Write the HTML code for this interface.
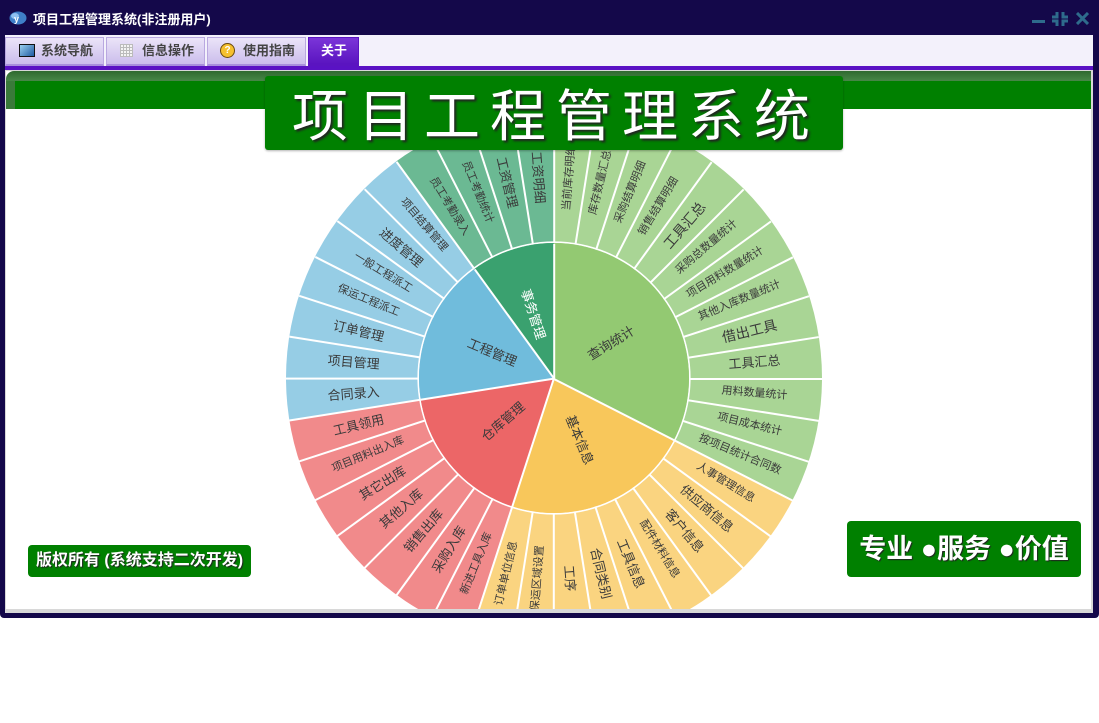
<!DOCTYPE html>
<html><head><meta charset="utf-8">
<style>
*{margin:0;padding:0;box-sizing:border-box}
body{width:1099px;height:723px;background:#fff;position:relative;overflow:hidden;font-family:"Liberation Sans","Noto Sans CJK SC",sans-serif}
.a{position:absolute}
#frame{left:0;top:0;width:1099px;height:618px;background:#14084a;border-radius:0 0 4px 4px}
#title{left:33px;top:9px;color:#fff;font-size:13px;font-weight:bold}
#tabbar{left:5px;top:35px;width:1088px;height:31px;background:#f3f1fb}
.tab{position:absolute;top:2px;height:29px;background:linear-gradient(#ebe4f8,#cbbdec);border:1px solid #b9a8e0;border-bottom:2px solid #a88fdc;font-size:13px;font-weight:bold;color:#444;line-height:26px}
#pline{left:5px;top:66px;width:1088px;height:4px;background:#5a12c4}
#content{left:5px;top:70px;width:1088px;height:543px;background:#d8d8d8}
#inner{left:6px;top:71px;width:1085px;height:538px;background:#fff;overflow:hidden}
.seg{position:absolute;left:548px;top:307px;height:1.6px;background:#fff;transform-origin:0 50%}
.l{position:absolute;left:548px;top:307px;width:0;height:0}
.l span{position:absolute;transform:translate(-50%,-50%);white-space:nowrap;color:#3a3a3a;font-size:12px;line-height:1}
</style></head><body>
<div class="a" id="frame"></div>
<svg class="a" style="left:9px;top:10px" width="18" height="16"><ellipse cx="9" cy="8" rx="8.5" ry="6.5" fill="#3f7fc8"/><ellipse cx="6" cy="6" rx="4" ry="3" fill="#8fc0f0"/><text x="5" y="12" font-size="9" font-weight="bold" fill="#fff" font-family="Liberation Sans">y</text></svg>
<div class="a" id="title">项目工程管理系统(非注册用户)</div>
<div class="a" style="left:1032px;top:20px;width:13px;height:3px;background:#2e6b8c"></div>
<svg class="a" style="left:1052px;top:12px" width="16" height="14" stroke="#2e6b8c" stroke-width="3" fill="none"><path d="M5 0V5H0M11 0V5H16M5 14V9H0M11 14V9H16"/></svg>
<svg class="a" style="left:1076px;top:12px" width="13" height="13" stroke="#2e6b8c" stroke-width="3"><path d="M1 1L12 12M12 1L1 12"/></svg>
<div class="a" id="tabbar"></div>
<div class="tab" style="left:5px;width:99px;top:37px"><span style="position:absolute;left:13px;top:6px;width:16px;height:13px;border:1px solid #111;background:linear-gradient(135deg,#9ad0f0,#1e5aa0)"></span><span style="position:absolute;left:35px">系统导航</span></div>
<div class="tab" style="left:106px;width:99px;top:37px"><span style="position:absolute;left:13px;top:6px;width:13px;height:13px;background:repeating-linear-gradient(90deg,#bbb 0 1px,transparent 1px 3px),repeating-linear-gradient(0deg,#bbb 0 1px,#f4f4f4 1px 3px)"></span><span style="position:absolute;left:35px">信息操作</span></div>
<div class="tab" style="left:207px;width:99px;top:37px"><span style="position:absolute;left:12px;top:5px;width:15px;height:15px;border-radius:50%;background:#f5c030;border:1px solid #6a4a10;font-size:10px;line-height:13px;text-align:center;color:#fff;font-weight:bold">?</span><span style="position:absolute;left:35px">使用指南</span></div>
<div class="tab" style="left:308px;width:51px;top:37px;background:linear-gradient(#7b35d8,#5a14c0);color:#fff;border-color:#5a14c0"><span style="position:absolute;left:12px">关于</span></div>
<div class="a" id="pline"></div>
<div class="a" id="content"></div>
<div class="a" id="inner">
 <div class="a" style="left:0;top:0;width:1085px;height:11px;background:linear-gradient(#2f6a2f,#4a8a4a);border-radius:8px 0 0 0"></div>
 <div class="a" style="left:0;top:10px;width:1085px;height:28px;background:#3a7a3a"></div>
 <div class="a" style="left:9px;top:10px;width:1076px;height:28px;background:#008000"></div>
 <div class="a" style="left:280px;top:39px;width:536px;height:536px;border-radius:50%;background:conic-gradient(#a9d595 0 117deg,#fad480 117deg 198deg,#f18a8b 198deg 261deg,#96cde5 261deg 324deg,#6bb993 324deg 360deg)"></div>
 <div class="seg" style="width:268px;transform:rotate(-90deg)"></div>
 <div class="seg" style="width:268px;transform:rotate(27deg)"></div>
 <div class="seg" style="width:268px;transform:rotate(108deg)"></div>
 <div class="seg" style="width:268px;transform:rotate(171deg)"></div>
 <div class="seg" style="width:268px;transform:rotate(234deg)"></div>
 <div class="seg" style="width:268px;transform:rotate(-81deg)"></div><div class="seg" style="width:268px;transform:rotate(-72deg)"></div><div class="seg" style="width:268px;transform:rotate(-63deg)"></div><div class="seg" style="width:268px;transform:rotate(-54deg)"></div><div class="seg" style="width:268px;transform:rotate(-45deg)"></div><div class="seg" style="width:268px;transform:rotate(-36deg)"></div><div class="seg" style="width:268px;transform:rotate(-27deg)"></div><div class="seg" style="width:268px;transform:rotate(-18deg)"></div><div class="seg" style="width:268px;transform:rotate(-9deg)"></div><div class="seg" style="width:268px;transform:rotate(0deg)"></div><div class="seg" style="width:268px;transform:rotate(9deg)"></div><div class="seg" style="width:268px;transform:rotate(18deg)"></div><div class="seg" style="width:268px;transform:rotate(36deg)"></div><div class="seg" style="width:268px;transform:rotate(45deg)"></div><div class="seg" style="width:268px;transform:rotate(54deg)"></div><div class="seg" style="width:268px;transform:rotate(63deg)"></div><div class="seg" style="width:268px;transform:rotate(72deg)"></div><div class="seg" style="width:268px;transform:rotate(81deg)"></div><div class="seg" style="width:268px;transform:rotate(90deg)"></div><div class="seg" style="width:268px;transform:rotate(99deg)"></div><div class="seg" style="width:268px;transform:rotate(117deg)"></div><div class="seg" style="width:268px;transform:rotate(126deg)"></div><div class="seg" style="width:268px;transform:rotate(135deg)"></div><div class="seg" style="width:268px;transform:rotate(144deg)"></div><div class="seg" style="width:268px;transform:rotate(153deg)"></div><div class="seg" style="width:268px;transform:rotate(162deg)"></div><div class="seg" style="width:268px;transform:rotate(180deg)"></div><div class="seg" style="width:268px;transform:rotate(189deg)"></div><div class="seg" style="width:268px;transform:rotate(198deg)"></div><div class="seg" style="width:268px;transform:rotate(207deg)"></div><div class="seg" style="width:268px;transform:rotate(216deg)"></div><div class="seg" style="width:268px;transform:rotate(225deg)"></div><div class="seg" style="width:268px;transform:rotate(243deg)"></div><div class="seg" style="width:268px;transform:rotate(252deg)"></div><div class="seg" style="width:268px;transform:rotate(261deg)"></div>
 <div class="a" style="left:413px;top:172px;width:270px;height:270px;border-radius:50%;background:conic-gradient(#93c972 0 117deg,#f8c75b 117deg 198deg,#ec6667 198deg 261deg,#70bcdc 261deg 324deg,#3aa16f 324deg 360deg);box-shadow:0 0 0 1.6px #fff"></div>
 <div class="seg" style="width:135px;transform:rotate(-90deg)"></div>
 <div class="seg" style="width:135px;transform:rotate(27deg)"></div>
 <div class="seg" style="width:135px;transform:rotate(108deg)"></div>
 <div class="seg" style="width:135px;transform:rotate(171deg)"></div>
 <div class="seg" style="width:135px;transform:rotate(234deg)"></div>
 <div class="l" style="transform:rotate(-31.5deg) translateX(67px)"><span style="font-size:13px">查询统计</span></div>
 <div class="l" style="transform:rotate(67.5deg) translateX(67px)"><span style="font-size:13px">基本信息</span></div>
 <div class="l" style="transform:rotate(139.5deg) translateX(67px) rotate(180deg)"><span style="font-size:13px">仓库管理</span></div>
 <div class="l" style="transform:rotate(202.5deg) translateX(67px) rotate(180deg)"><span style="font-size:13px">工程管理</span></div>
 <div class="l" style="transform:rotate(252deg) translateX(67px) rotate(180deg)"><span style="font-size:13px;color:#fff">事务管理</span></div>
 <div class="l" style="transform:rotate(-85.5deg) translateX(201px)"><span style="font-size:11px">当前库存明细</span></div>
 <div class="l" style="transform:rotate(-76.5deg) translateX(201px)"><span style="font-size:11px">库存数量汇总</span></div>
 <div class="l" style="transform:rotate(-67.5deg) translateX(201px)"><span style="font-size:11px">采购结算明细</span></div>
 <div class="l" style="transform:rotate(-58.5deg) translateX(201px)"><span style="font-size:11px">销售结算明细</span></div>
 <div class="l" style="transform:rotate(-49.5deg) translateX(201px)"><span style="font-size:14px">工具汇总</span></div>
 <div class="l" style="transform:rotate(-40.5deg) translateX(201px)"><span style="font-size:11px">采购总数量统计</span></div>
 <div class="l" style="transform:rotate(-31.5deg) translateX(201px)"><span style="font-size:11px">项目用料数量统计</span></div>
 <div class="l" style="transform:rotate(-22.5deg) translateX(201px)"><span style="font-size:11px">其他入库数量统计</span></div>
 <div class="l" style="transform:rotate(-13.5deg) translateX(201px)"><span style="font-size:14px">借出工具</span></div>
 <div class="l" style="transform:rotate(-4.5deg) translateX(201px)"><span style="font-size:13px">工具汇总</span></div>
 <div class="l" style="transform:rotate(4.5deg) translateX(201px)"><span style="font-size:11px">用料数量统计</span></div>
 <div class="l" style="transform:rotate(13.5deg) translateX(201px)"><span style="font-size:11px">项目成本统计</span></div>
 <div class="l" style="transform:rotate(22.5deg) translateX(201px)"><span style="font-size:11px">按项目统计合同数</span></div>
 <div class="l" style="transform:rotate(31.5deg) translateX(201px)"><span style="font-size:11px">人事管理信息</span></div>
 <div class="l" style="transform:rotate(40.5deg) translateX(201px)"><span style="font-size:13px">供应商信息</span></div>
 <div class="l" style="transform:rotate(49.5deg) translateX(201px)"><span style="font-size:13px">客户信息</span></div>
 <div class="l" style="transform:rotate(58.5deg) translateX(201px)"><span style="font-size:11px">配件材料信息</span></div>
 <div class="l" style="transform:rotate(67.5deg) translateX(201px)"><span style="font-size:13px">工具信息</span></div>
 <div class="l" style="transform:rotate(76.5deg) translateX(201px)"><span style="font-size:13px">合同类别</span></div>
 <div class="l" style="transform:rotate(85.5deg) translateX(201px)"><span style="font-size:13px">工序</span></div>
 <div class="l" style="transform:rotate(94.5deg) translateX(201px) rotate(180deg)"><span style="font-size:11px">保运区域设置</span></div>
 <div class="l" style="transform:rotate(103.5deg) translateX(201px) rotate(180deg)"><span style="font-size:11px">订单单位信息</span></div>
 <div class="l" style="transform:rotate(112.5deg) translateX(201px) rotate(180deg)"><span style="font-size:11px">新进工具入库</span></div>
 <div class="l" style="transform:rotate(121.5deg) translateX(201px) rotate(180deg)"><span style="font-size:13px">采购入库</span></div>
 <div class="l" style="transform:rotate(130.5deg) translateX(201px) rotate(180deg)"><span style="font-size:13px">销售出库</span></div>
 <div class="l" style="transform:rotate(139.5deg) translateX(201px) rotate(180deg)"><span style="font-size:13px">其他入库</span></div>
 <div class="l" style="transform:rotate(148.5deg) translateX(201px) rotate(180deg)"><span style="font-size:13px">其它出库</span></div>
 <div class="l" style="transform:rotate(157.5deg) translateX(201px) rotate(180deg)"><span style="font-size:11px">项目用料出入库</span></div>
 <div class="l" style="transform:rotate(166.5deg) translateX(201px) rotate(180deg)"><span style="font-size:13px">工具领用</span></div>
 <div class="l" style="transform:rotate(175.5deg) translateX(201px) rotate(180deg)"><span style="font-size:13px">合同录入</span></div>
 <div class="l" style="transform:rotate(184.5deg) translateX(201px) rotate(180deg)"><span style="font-size:13px">项目管理</span></div>
 <div class="l" style="transform:rotate(193.5deg) translateX(201px) rotate(180deg)"><span style="font-size:13px">订单管理</span></div>
 <div class="l" style="transform:rotate(202.5deg) translateX(201px) rotate(180deg)"><span style="font-size:11px">保运工程派工</span></div>
 <div class="l" style="transform:rotate(211.5deg) translateX(201px) rotate(180deg)"><span style="font-size:11px">一般工程派工</span></div>
 <div class="l" style="transform:rotate(220.5deg) translateX(201px) rotate(180deg)"><span style="font-size:13px">进度管理</span></div>
 <div class="l" style="transform:rotate(229.5deg) translateX(201px) rotate(180deg)"><span style="font-size:11px">项目结算管理</span></div>
 <div class="l" style="transform:rotate(238.5deg) translateX(201px) rotate(180deg)"><span style="font-size:11px">员工考勤录入</span></div>
 <div class="l" style="transform:rotate(247.5deg) translateX(201px) rotate(180deg)"><span style="font-size:11px">员工考勤统计</span></div>
 <div class="l" style="transform:rotate(256.5deg) translateX(201px) rotate(180deg)"><span style="font-size:13px">工资管理</span></div>
 <div class="l" style="transform:rotate(265.5deg) translateX(201px) rotate(180deg)"><span style="font-size:13px">工资明细</span></div>
 <div class="a" style="left:259px;top:5px;width:578px;height:74px;background:#008000;border-radius:3px;box-shadow:0 1px 2px rgba(0,0,0,.3)"></div>
 <div class="a" style="left:259px;top:5px;width:578px;height:74px;text-align:center;line-height:74px;color:#fff;font-size:56px;letter-spacing:10px;padding-left:4px;text-shadow:2px 2px 2px #222;font-family:'Noto Sans CJK SC',sans-serif">项目工程管理系统</div>
 <div class="a" style="left:22px;top:474px;width:223px;height:32px;background:#008000;border-radius:4px;color:#fff;font-size:16px;font-weight:bold;line-height:32px;text-align:center;text-shadow:1px 1px 1px #222">版权所有 (系统支持二次开发)</div>
 <div class="a" style="left:841px;top:450px;width:234px;height:56px;background:#008000;border-radius:4px;color:#fff;font-size:27px;font-weight:bold;line-height:56px;text-align:center;text-shadow:1px 1px 1px #222">专业 ●服务 ●价值</div>
</div>
</body></html>
